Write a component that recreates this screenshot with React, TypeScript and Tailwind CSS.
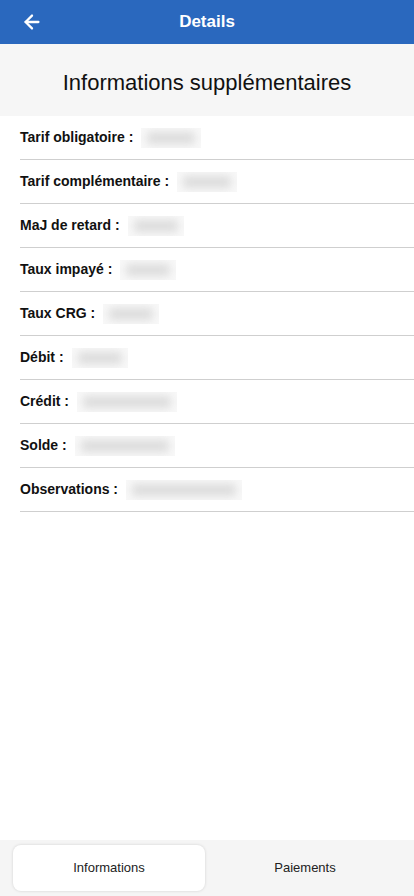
import { ArrowLeft } from "lucide-react";

interface IRow {
  label: string;
  width: number;
}

const rows: IRow[] = [
  { label: "Tarif obligatoire :", width: 60 },
  { label: "Tarif complémentaire :", width: 60 },
  { label: "MaJ de retard :", width: 56 },
  { label: "Taux impayé :", width: 56 },
  { label: "Taux CRG :", width: 56 },
  { label: "Débit :", width: 56 },
  { label: "Crédit :", width: 100 },
  { label: "Solde :", width: 100 },
  { label: "Observations :", width: 116 },
];

export default function App() {
  return (
    <div className="w-[414px] h-[896px] bg-white flex flex-col font-['Liberation_Sans',Arial,sans-serif] text-[#111]">
      {/* Header */}
      <div className="h-[44px] bg-[#2a68be] flex items-center relative shrink-0">
        <button className="absolute left-[21px] top-[11px] text-white">
          <ArrowLeft size={22} strokeWidth={2.5} />
        </button>
        <h1 className="w-full text-center text-white font-bold text-[17px]">Details</h1>
      </div>

      {/* Title */}
      <div className="h-[72px] bg-[#f6f6f6] flex items-center justify-center shrink-0">
        <h2 className="text-[22px] text-[#111] pt-[4px]">Informations supplémentaires</h2>
      </div>

      {/* Rows */}
      <div className="flex-1 pl-[20px]">
        {rows.map((row) => (
          <div key={row.label} className="h-[44px] flex items-center border-b border-[#cfcfcf]">
            <span className="font-bold text-[14px] text-[#111]">{row.label}</span>
            {/* blurred value */}
            <span
              className="ml-[8px] h-[20px] bg-[#f8f8f8] flex items-center px-[6px] overflow-hidden"
              style={{ width: row.width }}
            >
              <span className="w-full h-[12px] bg-[#dcdcdc] blur-[4px] rounded"></span>
            </span>
          </div>
        ))}
      </div>

      {/* Bottom tabs */}
      <div className="h-[56px] bg-[#f5f5f5] flex items-center px-[13px] gap-[4px] shrink-0">
        <button className="w-[192px] h-[46px] bg-white rounded-lg shadow-[0_0_3px_rgba(0,0,0,0.15)] text-[13px] text-[#222]">
          Informations
        </button>
        <button className="flex-1 h-[46px] text-[13px] text-[#222]">Paiements</button>
      </div>
    </div>
  );
}
